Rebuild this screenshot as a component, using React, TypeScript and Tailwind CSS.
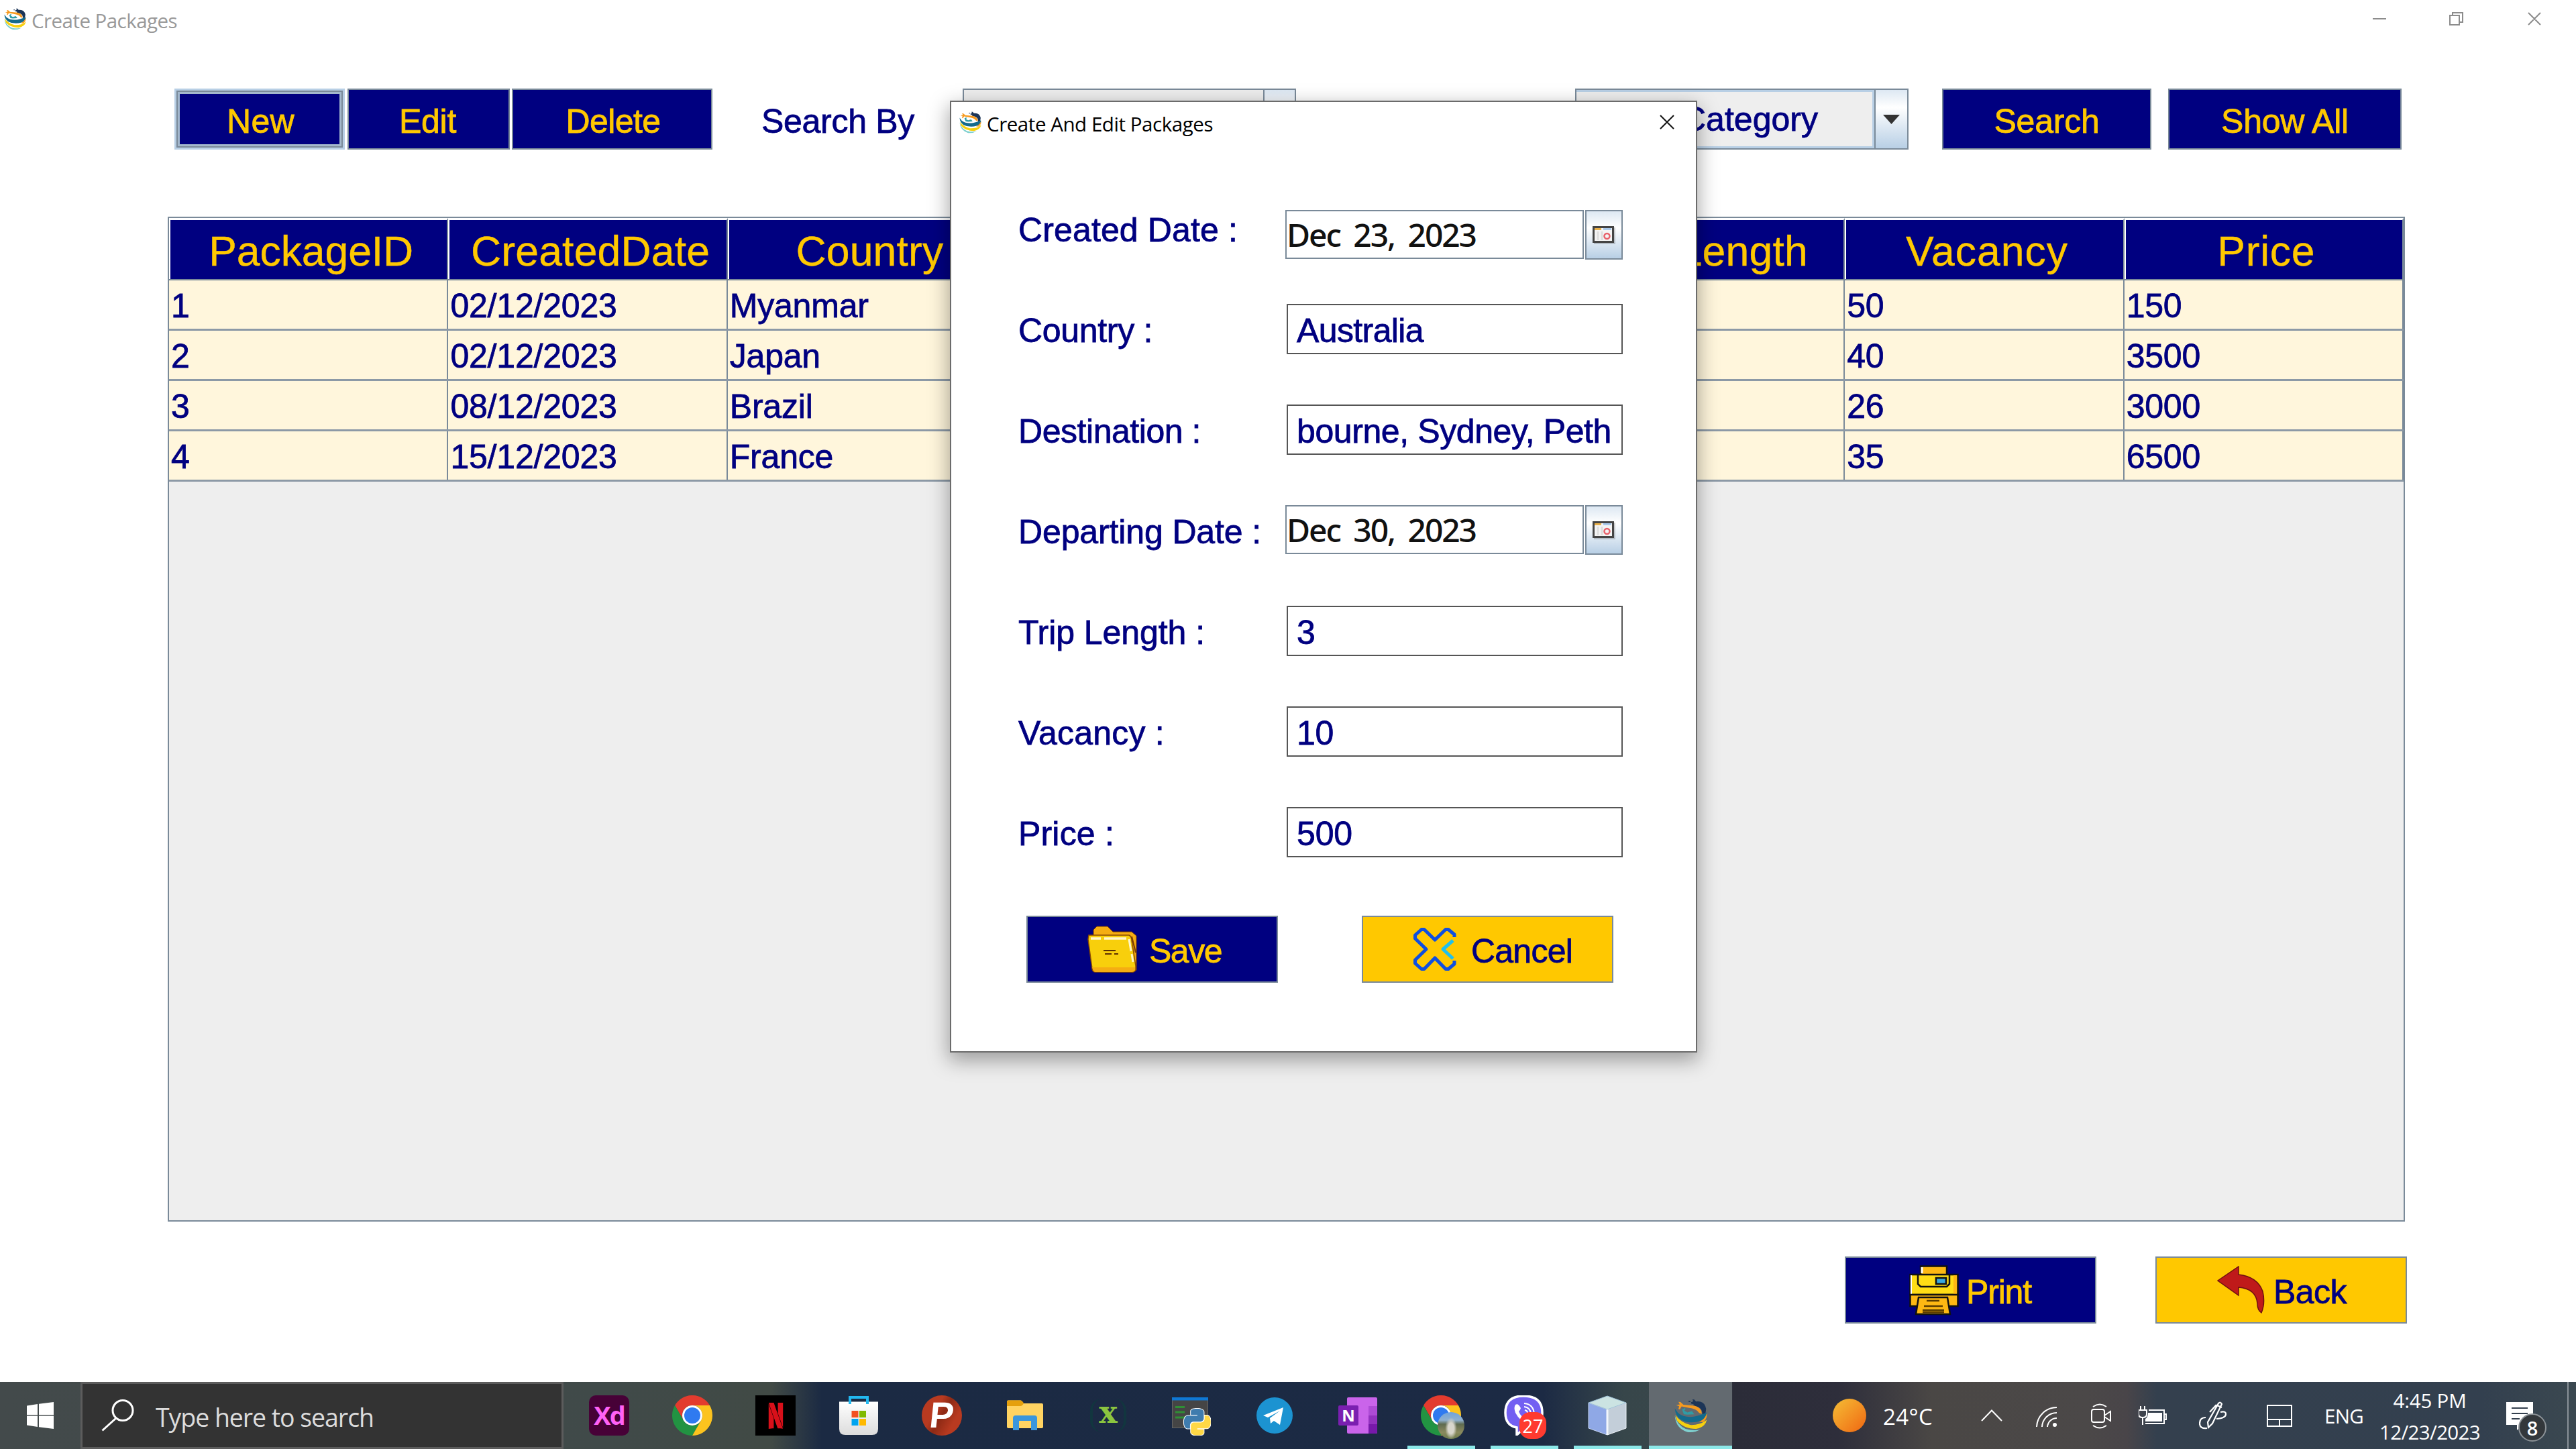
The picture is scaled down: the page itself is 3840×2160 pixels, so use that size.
import { useLayoutEffect, useRef, type ReactNode } from "react";
import { SiNetflix } from "react-icons/si";

const ARIAL = "font-['Liberation_Sans',Arial,sans-serif]";
const SEGOE = "font-['Open_Sans','Noto_Sans',sans-serif]";
const HEAVY = "[-webkit-text-stroke:0.8px_currentColor]";

/** One line of text whose tracking is spread so that it fills the width w. */
function Fit({ w, className = "", children }: { w: number; className?: string; children: string }) {
  const ref = useRef<HTMLSpanElement>(null);
  useLayoutEffect(() => {
    const el = ref.current;
    if (!el) return;
    el.style.letterSpacing = "0px";
    el.style.width = "auto";
    const natural = el.getBoundingClientRect().width;
    el.style.letterSpacing = `${(w - natural) / children.length}px`;
    el.style.width = `${w}px`;
  }, [w, children]);
  return (
    <span ref={ref} className={`inline-block shrink-0 whitespace-pre ${className}`}>
      {children}
    </span>
  );
}

function GlobeLogo({ className }: { className: string }) {
  return (
    <svg viewBox="50 42 146 154" preserveAspectRatio="none" className={className}>
      <path d="M113 52H121V57H113ZM124 58L134 54L130 45L138 46L146 55Q184 50 191 88L188 108L174 112Q176 84 146 76L133 80L136 68L124 64Z" fill="#1d3557" />
      <path d="M58 71L74 68L68 56L77 57L90 69L140 74Q172 84 172 110L160 106Q150 88 112 83L82 77L74 90L68 89L71 76Z" fill="#f79a1e" />
      <path d="M84 90L90 88L94 84L100 87L94 96L108 104L128 98L138 112L108 114L92 112Z" fill="#2f9ca6" />
      <path d="M52 86L66 106Q96 130 140 122Q178 114 192 104Q196 130 166 142Q120 158 78 136Q54 118 52 86Z" fill="#136a8c" />
      <path d="M194 108Q196 136 176 148L160 146Q186 134 194 108Z" fill="#f79a1e" />
      <path d="M54 116Q80 150 120 160Q166 162 194 136Q188 170 146 178Q92 178 62 142Z" fill="#f6d00f" />
      <path d="M52 118Q62 160 100 178Q138 188 166 180Q140 196 108 192Q56 176 52 118Z" fill="#7fd0cf" />
    </svg>
  );
}

function ChromeIcon({ className }: { className: string }) {
  return (
    <svg viewBox="0 0 48 48" className={className}>
      <path d="M24 12H44.8A24 24 0 0 0 3.2 12L13.6 30A12 12 0 0 1 24 12Z" fill="#e33b2e" />
      <path d="M13.6 30L3.2 12A24 24 0 0 0 24 48L34.4 30A12 12 0 0 1 13.6 30Z" fill="#229342" />
      <path d="M34.4 30L24 48A24 24 0 0 0 44.8 12H24A12 12 0 0 1 34.4 30Z" fill="#fcc31e" />
      <circle cx="24" cy="24" r="12" fill="#fff" />
      <circle cx="24" cy="24" r="9.6" fill="#2f7af0" />
    </svg>
  );
}

function SwingButton({ w, text, textW, className = "" }: { w: string; text: string; textW: number; className?: string }) {
  return (
    <div className={`flex h-[91px] shrink-0 items-center justify-center border-2 border-[#7a8a99] bg-[#000080] pt-[6px] text-[50px] leading-none text-[#ffc800] ${HEAVY} ${w} ${className}`}>
      <Fit w={textW}>{text}</Fit>
    </div>
  );
}

const columns: [string, number][] = [
  ["PackageID", 305],
  ["CreatedDate", 356],
  ["Country", 220],
  ["", 0],
  ["", 0],
  ["TripLength", 299],
  ["Vacancy", 242],
  ["Price", 146],
];
const rows = [
  ["1", "02/12/2023", "Myanmar", "", "", "", "50", "150"],
  ["2", "02/12/2023", "Japan", "", "", "", "40", "3500"],
  ["3", "08/12/2023", "Brazil", "", "", "", "26", "3000"],
  ["4", "15/12/2023", "France", "", "", "", "35", "6500"],
];

function PackageTable() {
  return (
    <div className="ml-[250px] mt-[100px] h-[1498px] w-[3335px] border-2 border-[#7a8a99] bg-[#eeeeee]">
      <div className="grid h-[93px] grid-cols-8 border-b-2 border-[#7a8a99]">
        {columns.map(([name, w], i) => (
          <div key={i} className="flex items-center justify-center border-l-2 border-t-3 border-r-2 border-l-white border-t-white border-r-[#7a8a99] bg-[#000080] pl-[7px] pt-[4px] text-[62.5px] leading-none text-[#ffc800] [-webkit-text-stroke:0.4px_currentColor]">
            {name && <Fit w={w}>{name}</Fit>}
          </div>
        ))}
      </div>
      {rows.map((r) => (
        <div key={r[0]} className="grid h-[75px] grid-cols-8 border-b-[3px] border-[#7a8a99]/85">
          {r.map((c, i) => (
            <div key={i} className={`flex items-center border-r-2 border-[#7a8a99] bg-[#fff6dc] pl-[3px] pt-[4px] text-[50px] leading-none tracking-[-0.2px] text-[#000080] ${HEAVY}`}>
              {c}
            </div>
          ))}
        </div>
      ))}
    </div>
  );
}

function ComboArrow({ className }: { className: string }) {
  return (
    <div className={`flex h-full items-center justify-center border-l-2 border-[#7a8a99] bg-linear-to-b from-[#dde8f3] via-white via-30% to-[#b8cfe5] ${className}`}>
      <svg viewBox="0 0 25 14" className="h-[14px] w-[25px]">
        <path d="M0 0H25L12.5 14Z" fill="#333" />
      </svg>
    </div>
  );
}

function Toolbar() {
  return (
    <div className="ml-[260px] mt-[72px] flex h-[91px] w-[3320px] shrink-0 items-stretch">
      <div className="w-[254px] border-[3px] border-[#b8cfe5] bg-[#7a8a99] p-[2px]">
        <div className={`flex h-full items-center justify-center border-[3px] border-[#a3b8cc] bg-[#000080] pl-[3px] pt-[6px] text-[50px] leading-none text-[#ffc800] ${HEAVY}`}>
          <Fit w={101}>New</Fit>
        </div>
      </div>
      <SwingButton w="w-[242px]" text="Edit" textW={85} className="ml-[4px] pr-[3px]" />
      <SwingButton w="w-[299px]" text="Delete" textW={141} className="ml-[3px] pl-[3px]" />
      <div className={`ml-[73px] flex w-[300px] items-center pt-[6px] text-[50px] leading-none text-[#000080] ${HEAVY}`}>
        <Fit w={228}>Search By</Fit>
      </div>
      <div className="flex w-[497px] justify-end border-2 border-[#7a8a99] bg-[#eeeeee]">
        <ComboArrow className="w-[47px]" />
      </div>
      <div className="ml-[416px] flex w-[497px] border-2 border-[#7a8a99] bg-[#eeeeee]">
        <div className={`flex flex-1 items-center justify-end border-y-[3px] border-r-[3px] border-[#b8cfe5] pr-[81px] text-[50px] leading-none text-[#000080] ${HEAVY}`}>
          <Fit w={203}>Category</Fit>
        </div>
        <ComboArrow className="w-[49px]" />
      </div>
      <SwingButton w="w-[312px]" text="Search" textW={157} className="ml-[50px]" />
      <SwingButton w="w-[348px]" text="Show All" textW={190} className="ml-[25px]" />
    </div>
  );
}

function CalendarButton() {
  return (
    <div className="ml-[2px] flex h-[74px] w-[56px] items-center justify-center border-2 border-[#7a8a99] bg-linear-to-b from-[#dde8f3] via-white via-35% to-[#b8cfe5]">
      <svg viewBox="0 0 34 27" className="h-[27px] w-[34px]">
        <rect x="2" y="2" width="32" height="25" fill="#000" opacity=".18" />
        <rect x="1.5" y="1.5" width="29" height="22" fill="#f4f4f4" stroke="#444" strokeWidth="3" />
        <rect x="3" y="3" width="10" height="3" fill="#e8b04a" />
        <rect x="16" y="3" width="12" height="3" fill="#a8c8ea" />
        <path d="M8 8V21M14 8V21" stroke="#ddd" strokeWidth="3" />
        <circle cx="21.500" cy="15" r="4" fill="none" stroke="#e8606a" strokeWidth="2.500" />
      </svg>
    </div>
  );
}

function DateField({ value, className }: { value: string; className: string }) {
  return (
    <div className={`-ml-[2px] flex items-start ${className}`}>
      <div className="flex h-[73px] w-[445px] items-center border-2 border-[#7a8a99] bg-white pt-[1px] font-['Noto_Sans','Open_Sans',sans-serif] text-[48px] font-medium leading-none text-[#111] [word-spacing:9px]">
        <Fit w={282}>{value}</Fit>
      </div>
      <CalendarButton />
    </div>
  );
}

function Field({ label, labelW, children }: { label: string; labelW: number; children: ReactNode }) {
  return (
    <div className="flex h-[150px] items-start">
      <div className={`flex h-[75px] w-[400px] items-center pt-[5px] ${HEAVY}`}>
        <Fit w={labelW}>{label}</Fit>
      </div>
      {children}
    </div>
  );
}

function Input({ value, w, end = false }: { value: string; w: number; end?: boolean }) {
  return (
    <div className="h-[75px] w-[501px] border-2 border-[#555] bg-white px-[13px] pt-[4px]">
      <div className={`flex h-full items-center ${HEAVY} ${end ? "justify-end pr-[2px]" : ""}`}>
        <Fit w={w}>{value}</Fit>
      </div>
    </div>
  );
}

function FolderIcon() {
  return (
    <svg viewBox="0 0 74 70" className="h-[70px] w-[74px]">
      <path d="M9 15V6L14 1H30L38 9H66L73 15V66L68 69H20Z" fill="#f5ad12" stroke="#7a3c00" strokeWidth="1" />
      <path d="M2 14H62Q66 16 66 22L72 60V66Q70 69 66 69H12Q8 69 7 64L1 20Z" fill="#f8cf0c" stroke="#8a4a00" strokeWidth="1.500" />
      <path d="M7 62L71 62V66Q70 69 66 69H12Q9 69 8 65Z" fill="#f5ad12" />
      <path d="M5 19H20M25 19H58" stroke="#fff6c8" strokeWidth="3.500" />
      <path d="M62 20L65 38M66 42L68 54" stroke="#fff6c8" strokeWidth="3" />
      <path d="M66 16L72 40" stroke="#7a3c00" strokeWidth="2" />
      <path d="M24 37H42M26 42H36M40 42H46" stroke="#5c3000" strokeWidth="2" />
    </svg>
  );
}

function CancelIcon() {
  return (
    <svg viewBox="0 0 64 64" className="h-[64px] w-[64px]" fill="none" strokeWidth="5" strokeLinejoin="round">
      <path d="M61 14V10L52 2.500H48L32 18L16 2.500H12L2.500 11V16L19 32L2.500 48V53L12 61.500H16L32 45L48 61.500H52L61 54V49" stroke="#0f4fe0" />
      <path d="M59 19L44 32L59 46" stroke="#1fc0ee" />
    </svg>
  );
}

function PrinterIcon() {
  return (
    <svg viewBox="0 0 74 75" className="h-[75px] w-[74px]" stroke="#111" strokeWidth="2.500">
      <path d="M17 14V1.500H56V14" fill="#fdb813" />
      <path d="M19 3V12" stroke="#fff" strokeWidth="3" />
      <rect x="1.500" y="14" width="71" height="30" fill="#ffdd15" />
      <path d="M66 15H71V43H66Z" fill="#fdb813" stroke="none" />
      <path d="M3 15V43" stroke="#fff" strokeWidth="2" />
      <path d="M13 14V28L17 32H56L60 28V14" fill="none" />
      <rect x="40" y="19" width="15" height="9" fill="#38a8e0" />
      <path d="M1.500 44H72.500V61H1.500Z" fill="#fdb813" />
      <path d="M14 48H57L61 73H10Z" fill="#fdb813" />
      <path d="M26 53H45M22 61H50M20 67H52M20 70H52" stroke="#5a3c00" />
    </svg>
  );
}

function BackIcon() {
  return (
    <svg viewBox="0 0 71 72" className="h-[72px] w-[71px]">
      <path d="M1 22L32 1V13Q60 16 68 38Q72 56 66 70Q60 66 60 56Q58 34 32 32V44Z" fill="#bf1a1a" stroke="#6e1010" strokeWidth="1.500" />
    </svg>
  );
}

function Dialog() {
  return (
    <div className="absolute left-[1416px] top-[150px] flex h-[1419px] w-[1114px] flex-col border-2 border-[#6b6b6b] bg-white shadow-[0_10px_28px_2px_rgba(0,0,0,0.34)]">
      <div className={`flex h-[66px] shrink-0 items-center pl-[12px] text-[29.500px] leading-none text-black ${SEGOE}`}>
        <GlobeLogo className="-mt-[6px] h-[33px] w-[33px]" />
        <Fit w={337} className="ml-[8px]">Create And Edit Packages</Fit>
        <svg viewBox="0 0 22 22" className="-mt-[6px] ml-auto mr-[32px] h-[22px] w-[22px]">
          <path d="M1 1L21 21M21 1L1 21" stroke="#111" strokeWidth="2" />
        </svg>
      </div>
      <div className="ml-[100px] mt-[85px] h-[1050px] shrink-0 text-[50px] leading-none text-[#000080]">
        <Field label="Created Date :" labelW={327}>
          <DateField value="Dec 23, 2023" className="mt-[10px]" />
        </Field>
        <Field label="Country :" labelW={200}>
          <Input value="Australia" w={189} />
        </Field>
        <Field label="Destination :" labelW={272}>
          <Input value="bourne, Sydney, Peth" w={469} end />
        </Field>
        <Field label="Departing Date :" labelW={362}>
          <DateField value="Dec 30, 2023" className="" />
        </Field>
        <Field label="Trip Length :" labelW={278}>
          <Input value="3" w={28} />
        </Field>
        <Field label="Vacancy :" labelW={218}>
          <Input value="10" w={55} />
        </Field>
        <Field label="Price :" labelW={143}>
          <Input value="500" w={83} />
        </Field>
      </div>
      <div className={`ml-[112px] mt-[12px] flex text-[50px] leading-none ${HEAVY}`}>
        <div className="flex h-[100px] w-[375px] items-center border-2 border-[#7a8a99] bg-[#000080] pl-[89px] text-[#ffc800]">
          <FolderIcon />
          <Fit w={108} className="ml-[18px] pt-[5px]">Save</Fit>
        </div>
        <div className="ml-[125px] flex h-[100px] w-[375px] items-center border-2 border-[#7a8a99] bg-[#ffc800] pl-[75px] text-[#000080]">
          <CancelIcon />
          <Fit w={151} className="ml-[22px] pt-[5px]">Cancel</Fit>
        </div>
      </div>
    </div>
  );
}

const pyPath =
  "M14.25.18l.9.2.73.26.59.3.45.32.34.34.25.34.16.33.1.3.04.26.02.2-.01.13V8.5l-.05.63-.13.55-.21.46-.26.38-.3.31-.33.25-.35.19-.35.14-.33.1-.3.07-.26.04-.21.02H8.77l-.69.05-.59.14-.5.22-.41.27-.33.32-.27.35-.2.36-.15.37-.1.35-.07.32-.04.27-.02.21v3.06H3.17l-.21-.03-.28-.07-.32-.12-.35-.18-.36-.26-.36-.36-.35-.46-.32-.59-.28-.73-.21-.88-.14-1.05-.05-1.23.06-1.22.16-1.04.24-.87.32-.71.36-.57.4-.44.42-.33.42-.24.4-.16.36-.1.32-.05.24-.01h.16l.06.01h8.16v-.83H6.18l-.01-2.75-.02-.37.05-.34.11-.31.17-.28.25-.26.31-.23.38-.2.44-.18.51-.15.58-.12.64-.1.71-.06.77-.04.84-.02 1.27.05z";

function TaskItem({ open = false, active = false, children }: { open?: boolean; active?: boolean; children: ReactNode }) {
  return (
    <div className={`relative flex h-full w-[124px] shrink-0 items-center justify-center ${active ? "bg-[#636a70]" : ""}`}>
      {children}
      {(open || active) && <div className={`absolute bottom-0 h-[5px] bg-[#8ce8e8] ${active ? "w-full" : "w-[101px]"}`} />}
    </div>
  );
}

function StoreIcon() {
  return (
    <svg viewBox="0 0 60 60" className="h-[60px] w-[60px]">
      <defs>
        <linearGradient id="bag" x1="0" y1="0" x2="0" y2="1">
          <stop offset="0" stopColor="#fff" />
          <stop offset="1" stopColor="#dcdcdc" />
        </linearGradient>
      </defs>
      <path d="M1 9.500H59V50Q59 59 50 59H10Q1 59 1 50Z" fill="url(#bag)" />
      <path d="M17 13V3H43V13" fill="none" stroke="#22b8f0" strokeWidth="4" />
      <rect x="19.500" y="23" width="10" height="10" fill="#f25022" />
      <rect x="31" y="23" width="10" height="10" fill="#7fba00" />
      <rect x="19.500" y="35" width="10" height="10" fill="#00a4ef" />
      <rect x="31" y="35" width="10" height="10" fill="#ffb900" />
    </svg>
  );
}

function ExplorerIcon() {
  return (
    <svg viewBox="0 0 54 46" className="h-[46px] w-[54px]">
      <path d="M0 2Q0 .5 2 .5H20Q22 .5 24 5H52Q54 5 54 7V40Q54 42 52 42H2Q0 42 0 40Z" fill="#ffd362" />
      <path d="M0 2Q0 .5 2 .5H20Q23 .5 25 5Q23 9 20 9H0Z" fill="#e5a00d" />
      <path d="M9 45V27Q9 23 13 23H41Q45 23 45 27V45H36V31H18V45Z" fill="#3a96dd" />
    </svg>
  );
}

function PythonIdeIcon() {
  return (
    <svg viewBox="0 0 58 60" className="h-[60px] w-[58px]">
      <rect x=".5" y="3.500" width="53" height="45" fill="#454545" stroke="#666" />
      <rect x="0" y="3" width="54" height="4.500" fill="#0f78d4" />
      <path d="M5 17.500H19M5 25H19M5 33H19" stroke="#2f8f35" strokeWidth="3" />
      <g transform="translate(18 20) scale(1.650)">
        <g stroke="#fff" strokeWidth="1.200">
          <path d={pyPath} />
          <path d={pyPath} transform="rotate(180 12 12)" />
        </g>
        <path d={pyPath} fill="#3f7cae" />
        <path d={pyPath} transform="rotate(180 12 12)" fill="#ffd845" />
      </g>
    </svg>
  );
}

function ViberIcon() {
  return (
    <div className="relative h-[60px] w-[60px]">
      <svg viewBox="0 0 60 60" className="h-[60px] w-[60px]">
        <path d="M29 1Q57 1 57 26Q57 50 29 50L19 59V48Q2 45 2 26Q2 1 29 1Z" fill="#7360f2" stroke="#fff" strokeWidth="3.500" />
        <path d="M17 14Q21 11 25 19Q24 23 22 24Q25 32 33 36Q36 32 42 37Q44 41 38 43Q24 40 17 26Q14 18 17 14Z" fill="#fff" />
        <path d="M30 12Q44 13 45 28M30 17Q39 18 40 27M31 22Q35 23 35 26" fill="none" stroke="#fff" strokeWidth="2" />
      </svg>
      <div className={`absolute left-[23px] top-[25px] flex h-[40px] w-[40px] items-center justify-center rounded-[16px] bg-[#ff3b30] text-[27px] leading-none text-white ${SEGOE}`}>27</div>
    </div>
  );
}

function CubeIcon() {
  return (
    <svg viewBox="0 0 58 60" className="h-[60px] w-[58px]" strokeLinejoin="round">
      <path d="M1 11L29 21V59L1 49Z" fill="#8fa8e6" stroke="#c7d6f6" />
      <path d="M57 11L29 21V59L57 49Z" fill="#c3ced9" stroke="#eef3f8" />
      <path d="M29 1L57 11L29 21L1 11Z" fill="#cbe3e2" stroke="#9fc2d8" />
      <path d="M29 21V59" stroke="#f2f6fb" strokeWidth="3" />
    </svg>
  );
}

function Taskbar() {
  return (
    <div className="flex h-[100px] w-full items-stretch overflow-hidden bg-[linear-gradient(90deg,#434a4b_0px,#404a49_900px,#414a45_1150px,#1b2a43_1225px,#1c2a44_2300px,#37464a_2420px,#3b484c_2580px,#2b2c38_2583px,#2e2e3b_2740px,#4a4745_2880px,#4b4848_3110px,#494549_3170px,#34404e_3215px,#33404f_3700px,#3b4850_3840px)]">
      <div className="flex w-[120px] shrink-0 items-center justify-center">
        <svg viewBox="0 0 40 40" className="h-[40px] w-[40px]" fill="#fff">
          <path d="M0 5.500L16 3V19H0ZM18 2.700L40 0V19H18ZM0 20.500H16V37L0 34.500ZM18 20.500H40V40L18 37.300Z" />
        </svg>
      </div>
      <div className={`flex w-[720px] shrink-0 items-center border-3 border-[#5c5c5c] bg-[#333] pl-[28px] text-[37.500px] leading-none text-[#dcdcdc] ${SEGOE}`}>
        <svg viewBox="0 0 50 48" className="h-[48px] w-[50px]" fill="none" stroke="#fff" strokeWidth="3">
          <circle cx="32" cy="16.500" r="15" />
          <path d="M22 28L1.500 46.500" />
        </svg>
        <Fit w={325} className="ml-[31px] pt-[5px]">Type here to search</Fit>
      </div>
      <div className="ml-[6px] flex shrink-0">
        <TaskItem>
          <div className={`flex h-[60px] w-[60px] items-center justify-center rounded-[10px] bg-[#470137] pb-[2px] text-[38px] font-bold leading-none tracking-[-2px] text-[#ff61f6] ${SEGOE}`}>Xd</div>
        </TaskItem>
        <TaskItem>
          <ChromeIcon className="h-[60px] w-[60px]" />
        </TaskItem>
        <TaskItem>
          <div className="flex h-[60px] w-[60px] items-center justify-center bg-black text-[#d8101a]">
            <SiNetflix className="h-[39px] w-[39px]" />
          </div>
        </TaskItem>
        <TaskItem>
          <StoreIcon />
        </TaskItem>
        <TaskItem>
          <div className="flex h-[60px] w-[60px] items-center justify-center rounded-full bg-[linear-gradient(120deg,#b83a20_35%,#8e2a15_50%,#b83a20_75%)] text-white">
            <span className={`-skew-x-6 pb-[2px] text-[54px] font-bold leading-none ${ARIAL}`}>P</span>
          </div>
        </TaskItem>
        <TaskItem>
          <ExplorerIcon />
        </TaskItem>
        <TaskItem>
          <div className="flex h-[50px] w-[54px] items-center justify-center rounded-[18px] border-x-[4px] border-[#12363f] pb-[10px] font-['DejaVu_Serif',serif] text-[46px] font-bold leading-none text-[#8bc53f]">x</div>
        </TaskItem>
        <TaskItem>
          <PythonIdeIcon />
        </TaskItem>
        <TaskItem>
          <svg viewBox="0 0 54 54" className="h-[54px] w-[54px]">
            <circle cx="27" cy="27" r="27" fill="#1c93d1" />
            <path d="M10 27L40 15L35 41L26 35L21 39L20 31L35 20L17 30Z" fill="#fff" />
          </svg>
        </TaskItem>
        <TaskItem>
          <div className="relative h-[56px] w-[58px]">
            <svg viewBox="0 0 58 56" className="h-[56px] w-[58px]">
              <rect x="13" y="1" width="45" height="54" rx="2" fill="#ca64ea" />
              <path d="M45 14H58V28H45Z" fill="#ae4bd5" />
              <path d="M45 28H58V41H45Z" fill="#9332bf" />
              <path d="M45 41H58V53Q58 55 56 55H45Z" fill="#7719aa" />
              <rect x="0" y="13" width="30" height="30" rx="2" fill="#7a1fb0" />
            </svg>
            <div className={`absolute left-0 top-[13px] flex h-[30px] w-[30px] items-center justify-center text-[24px] font-bold leading-none text-white ${SEGOE}`}>N</div>
          </div>
        </TaskItem>
        <TaskItem open>
          <div className="relative h-[60px] w-[60px]">
            <ChromeIcon className="h-[60px] w-[60px]" />
            <div className="absolute left-[25px] top-[25px] h-[40px] w-[40px] rounded-full bg-[radial-gradient(ellipse_22%_40%_at_50%_60%,#d8d6cc_50%,transparent_100%),linear-gradient(180deg,#6fa3dc_0%,#8fb0cf_30%,#5f6b50_45%,#8a8a5e_75%,#6d7b4e_100%)]" />
          </div>
        </TaskItem>
        <TaskItem open>
          <ViberIcon />
        </TaskItem>
        <TaskItem open>
          <CubeIcon />
        </TaskItem>
        <TaskItem active>
          <GlobeLogo className="h-[51px] w-[49px]" />
        </TaskItem>
      </div>
      <div className={`ml-[150px] flex shrink-0 items-center text-[29.500px] leading-none text-white ${SEGOE}`}>
        <div className="h-[50px] w-[50px] rounded-full bg-linear-135 from-[#f3bd35] to-[#ee6410]" />
        <Fit w={74} className="ml-[25px] pt-[2px] text-[33px]">24°C</Fit>
        <svg viewBox="0 0 32 18" className="ml-[72px] h-[18px] w-[32px]" fill="none" stroke="#fff" strokeWidth="2">
          <path d="M1 17L16 1.500L31 17" />
        </svg>
        <svg viewBox="0 0 32 32" className="ml-[50px] mt-[4px] h-[32px] w-[32px]" fill="none" stroke="#fff" strokeWidth="2">
          <path d="M1 31A30 30 0 0 1 31 2M9 31A22 22 0 0 1 31 10M17 31A14 14 0 0 1 31 18" />
          <circle cx="28" cy="28" r="3" fill="#fff" stroke="none" />
        </svg>
        <svg viewBox="0 0 30 38" className="ml-[50px] mt-[2px] h-[38px] w-[30px]" fill="none" stroke="#fff" strokeWidth="2">
          <rect x="1" y="9" width="19" height="19" rx="3" />
          <path d="M20 18L29 12V26L20 20M3 5Q13 -2 23 5M3 33Q13 40 23 33" />
        </svg>
        <svg viewBox="0 0 42 28" className="ml-[41px] h-[28px] w-[42px]" fill="none" stroke="#fff" strokeWidth="2">
          <path d="M15 6H38V26H10" />
          <path d="M38 12H41V20H38M3 0V6M9 0V6M0 6H12V12Q12 17 6 17Q0 17 0 12ZM6 17V28" />
          <path d="M14 10H35V23H10V19Q14 17 14 10Z" fill="#fff" stroke="none" />
        </svg>
        <svg viewBox="0 0 42 42" className="ml-[48px] h-[42px] w-[42px]" fill="none" stroke="#fff" strokeWidth="2.200">
          <path d="M29 3Q32 0 34 4L20 33L14 39L13 31ZM27 6L34 9M26 5L16 16M10 24Q1 24 1 33Q1 41 12 40M32 16Q40 14 40 19Q40 25 26 26" />
        </svg>
        <svg viewBox="0 0 38 33" className="ml-[59px] h-[33px] w-[38px]" fill="none" stroke="#fff" strokeWidth="2">
          <path d="M1 1H37V32H1ZM1 22H37M19 22V32" />
        </svg>
        <Fit w={58} className="ml-[48px] pt-[1px]">ENG</Fit>
        <div className="ml-[22px] flex w-[154px] flex-col items-center gap-[17px] pt-[2px]">
          <Fit w={109}>4:45 PM</Fit>
          <Fit w={150}>12/23/2023</Fit>
        </div>
        <div className="relative ml-[37px] h-[100px] w-[60px]">
          <svg viewBox="0 0 42 46" className="absolute left-0 top-[30px] h-[46px] w-[42px]">
            <path d="M0 0H40V34H24L16 42V34H0Z" fill="#fff" />
            <path d="M8 9H32M8 17H32M8 25H20" stroke="#34404e" strokeWidth="2" />
          </svg>
          <div className="absolute left-[18px] top-[47px] flex h-[42px] w-[42px] items-center justify-center rounded-full border-2 border-[#8b9196] bg-[#33373b] text-[29px] font-semibold leading-none">8</div>
        </div>
        <div className="ml-[31px] h-[100px] w-[2px] bg-[#8a9298]" />
      </div>
    </div>
  );
}

export default function App() {
  return (
    <div className={`relative h-[2160px] w-[3840px] overflow-hidden bg-white ${ARIAL}`}>
      <div className="flex h-[2060px] flex-col">
        <div className={`flex h-[60px] shrink-0 items-start pl-[6px] pr-[52px] text-[29.500px] leading-none text-[#999] ${SEGOE}`}>
          <GlobeLogo className="mt-[12px] h-[33px] w-[33px]" />
          <Fit w={217} className="ml-[8px] mt-[16px]">Create Packages</Fit>
          <svg viewBox="0 0 252 20" className="ml-auto mt-[18px] h-[20px] w-[252px]" fill="none" stroke="#8c8c8c" strokeWidth="2">
            <path d="M1 10H21M116 5H130V19H116ZM120 5V1H135V15H130M233 1L251 19M251 1L233 19" />
          </svg>
        </div>
        <Toolbar />
        <PackageTable />
        <div className={`ml-[2750px] mt-[52px] flex shrink-0 text-[50px] leading-none ${HEAVY}`}>
          <div className="flex h-[100px] w-[375px] items-center border-2 border-[#7a8a99] bg-[#000080] pl-[94px] text-[#ffc800]">
            <PrinterIcon />
            <Fit w={97} className="ml-[11px] pt-[6px]">Print</Fit>
          </div>
          <div className="ml-[88px] flex h-[100px] w-[375px] items-center border-2 border-[#7a8a99] bg-[#ffc800] pl-[90px] text-[#000080]">
            <BackIcon />
            <Fit w={109} className="ml-[13px] pt-[6px]">Back</Fit>
          </div>
        </div>
      </div>
      <Taskbar />
      <Dialog />
    </div>
  );
}
